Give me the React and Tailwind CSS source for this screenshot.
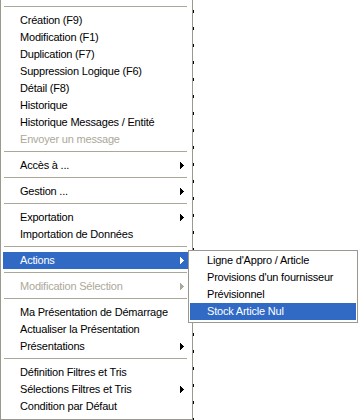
import React from "react";

const Arrow = ({ color = "#000" }) => (
  <svg width="4" height="7" viewBox="0 0 4 7" shapeRendering="crispEdges" className="shrink-0">
    <polygon points="0,0 4,3.5 0,7" fill={color} />
  </svg>
);

const Sep = ({ first }) => (
  <div className={first ? "pt-[6px] pb-[5px]" : "pt-[3px] pb-[5px]"}>
    <div className="h-px ml-px mr-[2px] bg-[#aca899]" />
  </div>
);

const Item = ({ label, sub, disabled, active }) => (
  <div
    className={
      "h-[17px] flex items-center justify-between pl-[17px] pr-[5px] whitespace-nowrap " +
      (active ? "bg-[#316ac5] text-white" : disabled ? "text-[#aca899]" : "text-black")
    }
  >
    <span className="leading-[17px]">{label}</span>
    {sub && <Arrow color={active ? "#fff" : disabled ? "#aca899" : "#000"} />}
  </div>
);

const groups = [
  [
    { label: "Création (F9)" },
    { label: "Modification (F1)" },
    { label: "Duplication (F7)" },
    { label: "Suppression Logique (F6)" },
    { label: "Détail (F8)" },
    { label: "Historique" },
    { label: "Historique Messages / Entité" },
    { label: "Envoyer un message", disabled: true },
  ],
  [{ label: "Accès à ...", sub: true }],
  [{ label: "Gestion ...", sub: true }],
  [{ label: "Exportation", sub: true }, { label: "Importation de Données" }],
  [{ label: "Actions", sub: true, active: true }],
  [{ label: "Modification Sélection", sub: true, disabled: true }],
  [
    { label: "Ma Présentation de Démarrage" },
    { label: "Actualiser la Présentation" },
    { label: "Présentations", sub: true },
  ],
  [
    { label: "Définition Filtres et Tris" },
    { label: "Sélections Filtres et Tris", sub: true },
    { label: "Condition par Défaut" },
  ],
];

const subItems = [
  { label: "Ligne d'Appro / Article" },
  { label: "Provisions d'un fournisseur" },
  { label: "Prévisionnel" },
  { label: "Stock Article Nul", active: true },
];

export default function App() {
  return (
    <div className="relative w-[360px] h-[420px] overflow-hidden bg-white text-[11px] tracking-[-0.2px] font-['Liberation_Sans',Arial,sans-serif]">
      <div className="flex">
        <div className="w-[193px] border-l border-r border-b border-[#9a988f] pl-[2px] pr-[3px] pb-[2px] bg-white">
          {groups.map((g, gi) => (
            <div key={gi}>
              <Sep first={gi === 0} />
              {g.map((it) => (
                <Item key={it.label} {...it} />
              ))}
            </div>
          ))}
        </div>
        <div className="w-px h-[420px] bg-[repeating-linear-gradient(to_bottom,transparent_0_10px,#000_10px_13px,transparent_13px_17px)]" />
      </div>
      <div className="flex gap-[40px] pl-[3px] pt-[1px]">
        <div className="w-[28px] h-[2px] bg-[repeating-linear-gradient(to_right,#333_0_2px,transparent_2px_4px)]" />
        <div className="w-[45px] h-[2px] bg-[repeating-linear-gradient(to_right,#333_0_2px,transparent_2px_4px)]" />
      </div>
      <div className="absolute left-[188px] top-[250px] w-[170px] border border-[#9a988f] bg-white p-px pb-[2px]">
        {subItems.map((it) => (
          <Item key={it.label} {...it} />
        ))}
      </div>
    </div>
  );
}
